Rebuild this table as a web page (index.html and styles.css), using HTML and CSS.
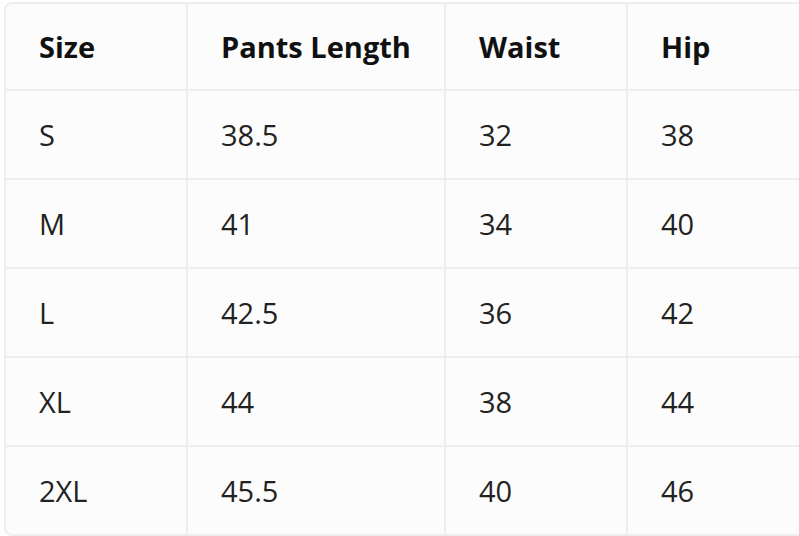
FILE: index.html
```html
<!DOCTYPE html>
<html>
<head>
<meta charset="utf-8">
<link rel="stylesheet" href="styles.css">
</head>
<body>
<div class="wrap">
<table class="size-table">
  <colgroup>
    <col class="c1"><col class="c2"><col class="c3"><col class="c4">
  </colgroup>
  <thead>
    <tr><th>Size</th><th>Pants Length</th><th>Waist</th><th>Hip</th></tr>
  </thead>
  <tbody>
    <tr><td>S</td><td>38.5</td><td>32</td><td>38</td></tr>
    <tr><td>M</td><td>41</td><td>34</td><td>40</td></tr>
    <tr><td>L</td><td>42.5</td><td>36</td><td>42</td></tr>
    <tr><td>XL</td><td>44</td><td>38</td><td>44</td></tr>
    <tr><td>2XL</td><td>45.5</td><td>40</td><td>46</td></tr>
  </tbody>
</table>
</div>
</body>
</html>
```
FILE: styles.css
```css
html, body {
  margin: 0;
  padding: 0;
  background: #ffffff;
  overflow: hidden;
  width: 799px;
  height: 536px;
}
.wrap {
  padding: 2px 0 0 4px;
}
.size-table {
  width: 830px;
  border-collapse: separate;
  border-spacing: 0;
  table-layout: fixed;
  background: #fcfcfc;
  border: 2px solid #eeeeee;
  border-radius: 8px;
  font-family: "Open Sans", "Noto Sans", sans-serif;
  font-size: 29px;
  color: #222222;
}
.c1 { width: 182px; }
.c2 { width: 258px; }
.c3 { width: 182px; }
.c4 { width: 208px; }
.size-table th, .size-table td {
  text-align: left;
  padding: 0 0 0 33px;
  height: 87px;
  border-right: 2px solid #eeeeee;
  border-bottom: 2px solid #eeeeee;
  vertical-align: middle;
}
.size-table th {
  height: 85px;
  font-weight: 700;
  color: #111111;
}
.size-table td { font-weight: 400; }
.size-table tr > :last-child { border-right: none; }
.size-table tbody tr:last-child td { border-bottom: none; }
```
